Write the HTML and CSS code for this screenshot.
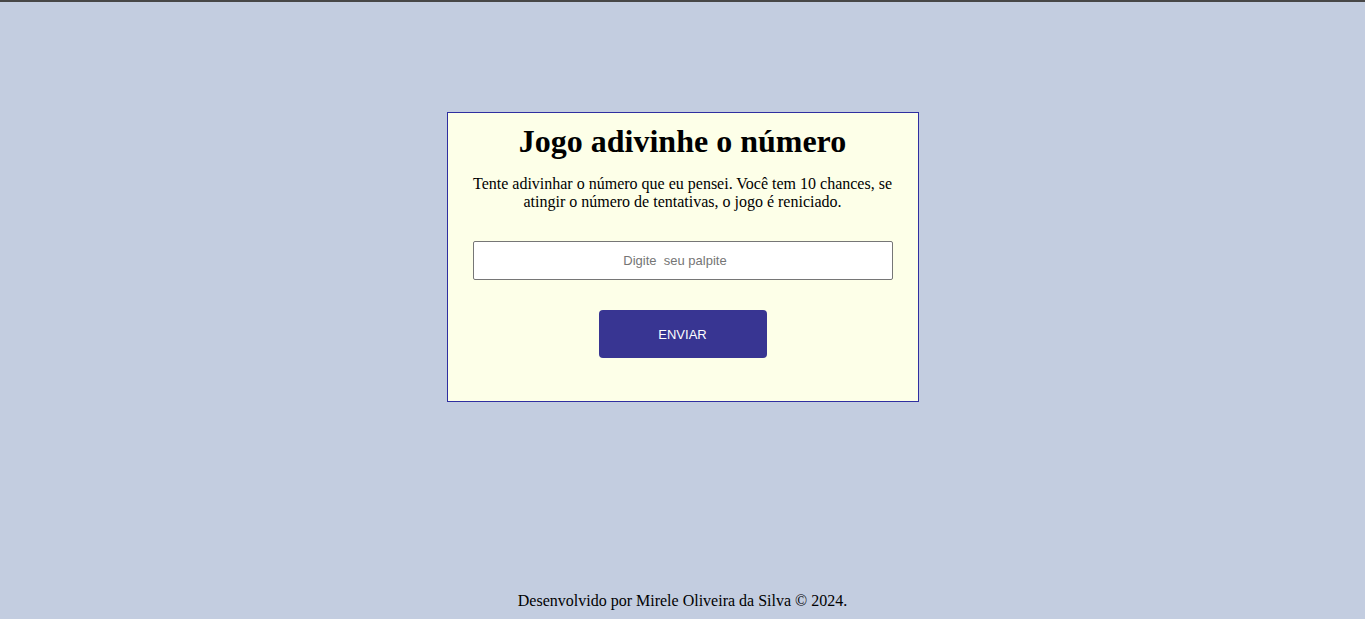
FILE: index.html
```html
<!DOCTYPE html>
<html lang="pt-BR">
<head>
<meta charset="utf-8">
<title>Jogo adivinhe o número</title>
<link rel="stylesheet" href="styles.css">
</head>
<body>
<main class="game">
  <h1 class="title">Jogo adivinhe o número</h1>
  <p class="desc">Tente adivinhar o número que eu pensei. Você tem 10 chances, se atingir o número de tentativas, o jogo é reniciado.</p>
  <input class="guess" type="number" placeholder="Digite  seu palpite">
  <button class="send" type="button">ENVIAR</button>
</main>
<footer class="footer">Desenvolvido por Mirele Oliveira da Silva © 2024.</footer>
</body>
</html>
```

FILE: styles.css
```css
html, body {
  margin: 0;
  padding: 0;
}
body {
  min-height: 100vh;
  box-sizing: border-box;
  border-top: 2px solid #474747;
  background: #c3cde0;
  font-family: "Liberation Serif", "Times New Roman", serif;
  color: #000;
  display: flex;
  flex-direction: column;
  align-items: center;
}
.game {
  margin-top: 110px;
  border: 1px solid #2f2fa0;
  background: #fdffe8;
  padding: 10px 25px 0;
  box-sizing: border-box;
  width: 472px;
  height: 290px;
  display: flex;
  flex-direction: column;
  align-items: center;
  text-align: center;
}
.title {
  margin: 0;
  font-size: 32px;
  font-weight: bold;
}
.desc {
  margin: 15px 0 0;
  font-size: 16px;
}
.guess {
  margin-top: 30px;
  width: 420px;
  height: 39px;
  box-sizing: border-box;
  border: 1px solid #767676;
  border-radius: 2px;
  background: #fff;
  font-family: "Liberation Sans", Arial, sans-serif;
  font-size: 13px;
  text-align: center;
  padding: 1px 17px 1px 2px;
  -moz-appearance: textfield;
}
.guess::-webkit-outer-spin-button,
.guess::-webkit-inner-spin-button {
  -webkit-appearance: none;
  margin: 0;
}
.guess::placeholder {
  color: #757575;
  white-space: pre;
}
.send {
  margin-top: 30px;
  width: 168px;
  height: 48px;
  border: none;
  border-radius: 4px;
  background: #383592;
  color: #fff;
  font-family: "Liberation Sans", Arial, sans-serif;
  font-size: 13px;
  cursor: pointer;
}
.footer {
  margin-top: auto;
  padding-bottom: 9px;
  font-size: 16px;
  text-align: center;
}
```
